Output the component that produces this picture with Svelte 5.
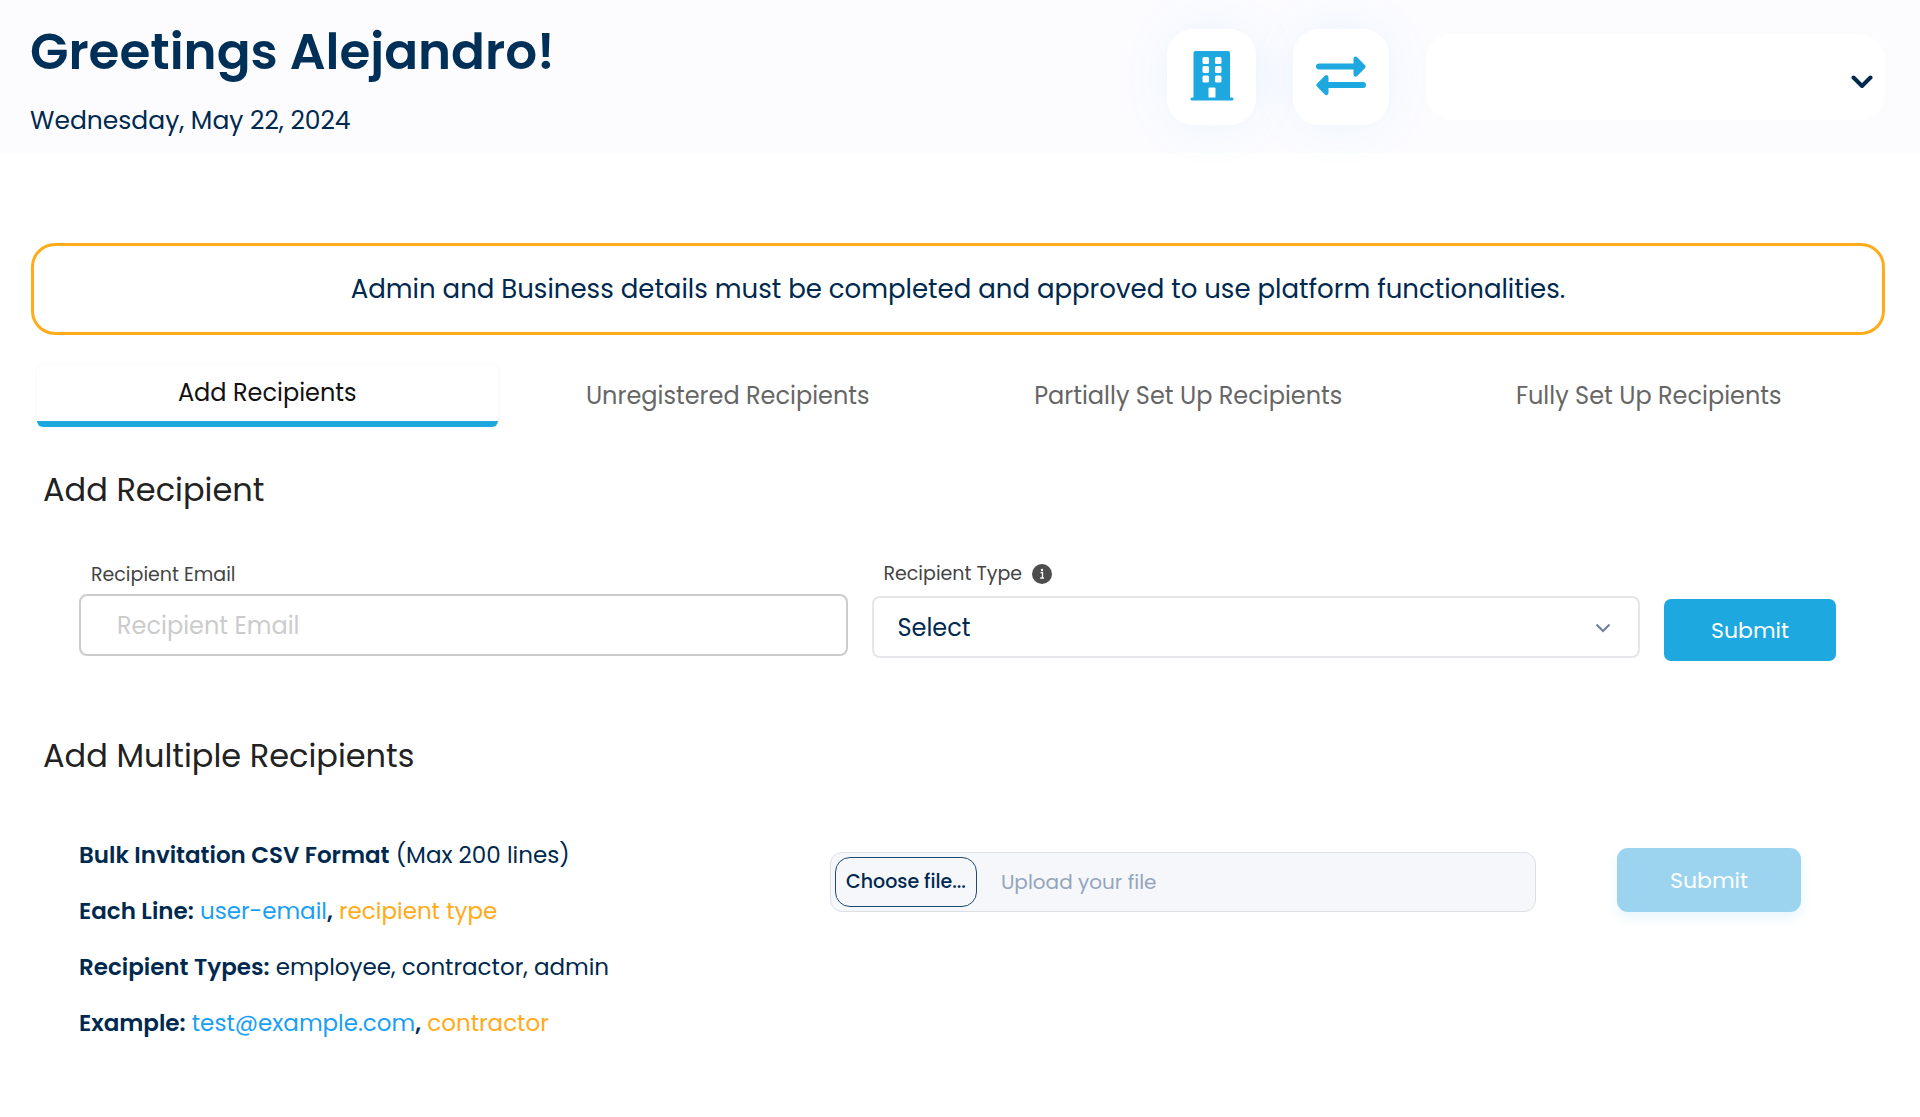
<script lang="ts">
  /**
   * Recipients page — single invite form plus bulk CSV upload.
   */
  type RecipientType = 'employee' | 'contractor' | 'admin';

  const tabs = [
    'Add Recipients',
    'Unregistered Recipients',
    'Partially Set Up Recipients',
    'Fully Set Up Recipients'
  ];
  const recipientTypes: RecipientType[] = ['employee', 'contractor', 'admin'];

  let activeTab = $state(0);
  let email = $state('');
  let recipientType = $state<RecipientType | ''>('');
  let files = $state<FileList | null>(null);

  let fileName = $derived(files?.[0]?.name ?? 'Upload your file');
</script>

<header class="top">
  <div class="greeting">
    <h1>Greetings Alejandro!</h1>
    <p>Wednesday, May 22, 2024</p>
  </div>

  <div class="actions">
    <button type="button" class="tile narrow" aria-label="Business">
      <svg width="44" height="50" viewBox="0 0 44 50" fill="#1ea8e0">
        <path
          fill-rule="evenodd"
          d="M5.500 0H38a2 2 0 0 1 2 2V46.500H42a1.500 1.500 0 0 1 0 3H2a1.500 1.500 0 0 1 0-3H3.500V2a2 2 0 0 1 2-2z
            M14 6a1.500 1.500 0 0 0-1.500 1.500v4A1.500 1.500 0 0 0 14 13h3.500a1.500 1.500 0 0 0 1.500-1.500v-4A1.500 1.500 0 0 0 17.500 6z
            M26.500 6a1.500 1.500 0 0 0-1.500 1.500v4a1.500 1.500 0 0 0 1.500 1.500H30a1.500 1.500 0 0 0 1.500-1.500v-4A1.500 1.500 0 0 0 30 6z
            M14 15a1.500 1.500 0 0 0-1.500 1.500v4A1.500 1.500 0 0 0 14 22h3.500a1.500 1.500 0 0 0 1.500-1.500v-4a1.500 1.500 0 0 0-1.500-1.500z
            M26.500 15a1.500 1.500 0 0 0-1.500 1.500v4a1.500 1.500 0 0 0 1.500 1.500H30a1.500 1.500 0 0 0 1.500-1.500v-4A1.500 1.500 0 0 0 30 15z
            M14 24.500a1.500 1.500 0 0 0-1.500 1.500v4a1.500 1.500 0 0 0 1.500 1.500h3.500A1.500 1.500 0 0 0 19 30v-4a1.500 1.500 0 0 0-1.500-1.500z
            M26.500 24.500A1.500 1.500 0 0 0 25 26v4a1.500 1.500 0 0 0 1.500 1.500H30a1.500 1.500 0 0 0 1.500-1.500v-4a1.500 1.500 0 0 0-1.500-1.500z
            M19.500 36.500a1 1 0 0 0-1 1v9h7v-9a1 1 0 0 0-1-1z"
        />
      </svg>
    </button>
    <button type="button" class="tile" aria-label="Transfers">
      <svg width="50" height="50" viewBox="0 0 50 50" fill="#1ea8e0">
        <path d="M3 12.500H37.500V8c0-2.300 2.200-3.200 3.700-1.700l7.600 7.700a2.200 2.200 0 0 1 0 3.200l-7.600 7.700c-1.500 1.500-3.700.600-3.700-1.700v-4.700H3a3 3 0 0 1 0-6z" />
        <path d="M47 31H12.500v-4.500c0-2.300-2.200-3.200-3.700-1.700L1.200 32.500a2.200 2.200 0 0 0 0 3.200l7.600 7.700c1.500 1.500 3.700.600 3.700-1.700V37H47a3 3 0 0 0 0-6z" />
      </svg>
    </button>
    <button type="button" class="account" aria-label="Account menu">
      <svg width="22" height="14" viewBox="0 0 22 14" fill="none" stroke="#00294f" stroke-width="4" stroke-linecap="round" stroke-linejoin="round">
        <path d="M2.500 2.500 11 11l8.500-8.500" />
      </svg>
    </button>
  </div>
</header>

<main>
  <div class="banner" role="status">
    Admin and Business details must be completed and approved to use platform functionalities.
  </div>

  <div class="tabs" role="tablist">
    {#each tabs as tab, i (tab)}
      <button
        type="button"
        role="tab"
        class="tab"
        class:active={i === activeTab}
        aria-selected={i === activeTab}
        onclick={() => (activeTab = i)}
      >{tab}</button>
    {/each}
  </div>

  <h2>Add Recipient</h2>
  <form class="single" onsubmit={(e) => e.preventDefault()}>
    <div class="field">
      <label for="email">Recipient Email</label>
      <input id="email" type="email" placeholder="Recipient Email" bind:value={email} />
    </div>
    <div class="field type">
      <label for="type">
        Recipient Type
        <svg width="20" height="20" viewBox="0 0 20 20">
          <circle cx="10" cy="10" r="10" fill="#4d4d4d" />
          <path d="M8.500 8.700h2v5M8.300 14h3.600" fill="none" stroke="#fff" stroke-width="1.300" />
          <circle cx="10" cy="6" r="1.200" fill="#fff" />
        </svg>
      </label>
      <div class="select-wrap">
        <select id="type" bind:value={recipientType}>
          <option value="">Select</option>
          {#each recipientTypes as type (type)}
            <option value={type}>{type}</option>
          {/each}
        </select>
        <svg class="caret" width="16" height="10" viewBox="0 0 16 10" fill="none" stroke="#6b7f9e" stroke-width="2">
          <path d="m1.500 1.500 6.500 6.500 6.500-6.500" />
        </svg>
      </div>
    </div>
    <button type="submit" class="submit">Submit</button>
  </form>

  <h2>Add Multiple Recipients</h2>
  <form class="bulk" onsubmit={(e) => e.preventDefault()}>
    <div class="format">
      <p><b>Bulk Invitation CSV Format</b> (Max 200 lines)</p>
      <p><b>Each Line:</b> <span class="blue">user-email</span><b>,</b> <span class="orange">recipient type</span></p>
      <p><b>Recipient Types:</b> employee, contractor, admin</p>
      <p><b>Example:</b> <span class="blue">test@example.com</span><b>,</b> <span class="orange">contractor</span></p>
    </div>
    <div class="upload">
      <label class="file">
        <input type="file" accept=".csv" bind:files />
        <span class="choose">Choose file...</span>
        <span class="file-name">{fileName}</span>
      </label>
      <button type="submit" class="submit" disabled={!files?.length}>Submit</button>
    </div>
  </form>
</main>

<style>
  :global(body) {
    background: #fff;
    color: #00294f;
    font-family: Poppins, Inter, sans-serif;
  }

  h1, h2, p { margin: 0; }
  b { font-weight: 600; }

  button, input, select {
    box-sizing: border-box;
    font-family: inherit;
  }

  button { cursor: pointer; }
  svg { display: block; }

  .top {
    display: flex;
    justify-content: space-between;
    align-items: flex-start;
    padding: 22px 35px 17px 30px;
    background: #fcfcff;
  }

  h1 {
    font-size: 50px;
    line-height: 60px;
    font-weight: 600;
    color: #003057;
  }

  .greeting p {
    margin-top: 24px;
    font-size: 25px;
    line-height: 30px;
  }

  .actions {
    display: flex;
    align-items: center;
    gap: 37px;
    padding-top: 7px;
  }

  .tile {
    display: grid;
    justify-items: center;
    align-content: start;
    width: 96px;
    height: 96px;
    padding: 22px 0 0;
    border: 0;
    border-radius: 26px;
    background: #fff;
    box-shadow: 0 0 50px rgba(30, 150, 225, 0.08);
  }

  .tile.narrow { width: 89px; }

  .account {
    display: flex;
    align-items: center;
    justify-content: flex-end;
    width: 459px;
    height: 86px;
    padding: 10px 12px 0;
    border: 0;
    border-radius: 26px;
    background: #fff;
  }

  main { padding: 90px 35px 70px 31px; }

  .banner {
    padding: 28px 24px;
    border: 3px solid #ffab1a;
    border-radius: 24px;
    font-size: 26px;
    line-height: 30px;
    text-align: center;
  }

  .tabs {
    display: grid;
    grid-template-columns: repeat(4, 1fr);
    margin: 30px 6px 43px;
  }

  .tab {
    height: 62px;
    padding: 0;
    border: 0;
    border-radius: 6px;
    background: none;
    color: #666;
    font-size: 24px;
    line-height: 30px;
  }

  .tab.active {
    border-bottom: 6px solid #1ea8e0;
    box-shadow: 0 0 4px rgba(0, 0, 0, 0.05);
    color: #111;
  }

  h2 {
    margin-left: 12px;
    font-size: 32px;
    line-height: 40px;
    font-weight: 400;
    color: #222;
  }

  .single {
    display: grid;
    grid-template-columns: 1fr 1fr 172px;
    align-items: start;
    gap: 24px;
    min-height: 101px;
    margin: 50px 49px 75px 48px;
  }

  .field {
    display: flex;
    flex-direction: column;
    gap: 4px;
  }

  .field label {
    padding-left: 12px;
    font-size: 19px;
    line-height: 30px;
    color: #444;
  }

  .field.type { gap: 8px; }

  .field.type label {
    display: flex;
    align-items: center;
    gap: 10px;
    line-height: 28px;
  }

  .field input,
  select {
    width: 100%;
    height: 62px;
    border: 2px solid #ccc;
    border-radius: 8px;
    background: #fff;
    color: #00294f;
    font-size: 24px;
    outline: none;
  }

  .field input { padding: 0 36px; }
  .field input::placeholder { color: #ccc; }
  .field input:focus, select:focus { border-color: #1ea8e0; }

  .select-wrap { position: relative; }

  select {
    padding: 0 24px;
    border-color: #e5e5ea;
    appearance: none;
  }

  .caret {
    position: absolute;
    top: 27px;
    right: 29px;
    pointer-events: none;
  }

  .submit {
    height: 62px;
    padding: 0;
    border: 0;
    border-radius: 7px;
    background: #1ea8e0;
    color: #fff;
    font-size: 22px;
  }

  .single .submit { align-self: end; }

  .bulk {
    display: flex;
    margin: 65px 84px 0 48px;
  }

  .format {
    flex: 751;
    display: flex;
    flex-direction: column;
    gap: 28px;
    font-size: 23px;
    line-height: 28px;
  }

  .blue { color: #1a9ff5; }
  .orange { color: #ffab1a; }

  .upload {
    flex: 971;
    display: flex;
    align-items: flex-end;
    align-self: flex-start;
    gap: 81px;
    padding-top: 7px;
  }

  .file {
    flex: 1;
    display: flex;
    align-items: center;
    gap: 24px;
    box-sizing: border-box;
    height: 60px;
    padding: 0 4px;
    border: 1px solid #dcdfe5;
    border-radius: 12px;
    background: #f6f7fb;
    cursor: pointer;
  }

  .file input {
    position: absolute;
    width: 1px;
    height: 1px;
    opacity: 0;
  }

  .choose {
    padding: 10px;
    border: 1px solid #1d4a70;
    border-radius: 15px;
    font-size: 19px;
    line-height: 28px;
    font-weight: 500;
  }

  .file-name {
    color: #93a5bb;
    font-size: 20px;
  }

  .bulk .submit {
    width: 184px;
    height: 64px;
    border-radius: 11px;
    box-shadow: 0 6px 12px rgba(30, 168, 224, 0.1);
  }

  .bulk .submit:disabled {
    background: #9cd4f0;
    cursor: default;
  }
</style>
